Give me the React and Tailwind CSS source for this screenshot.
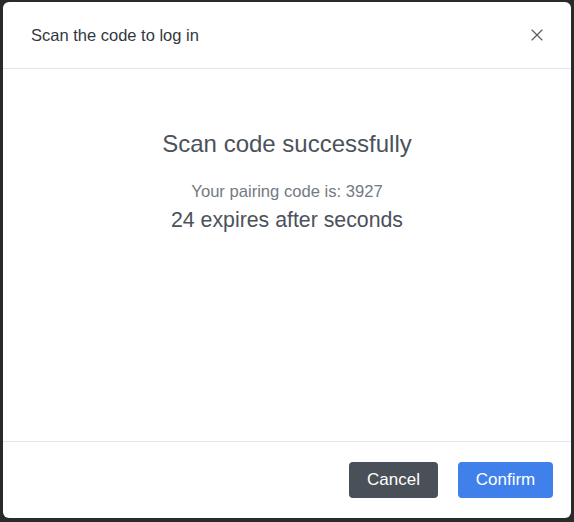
import { X } from 'lucide-react';

function App() {
  return (
    <div className="w-[574px] h-[522px] bg-[#2a2a2a] pt-[2px] pl-[3px] pr-[3px] pb-[4px] font-['Liberation_Sans',Arial,sans-serif]">
      <div className="h-full bg-white rounded-md flex flex-col">
        <div className="h-[67px] flex items-center justify-between pl-[28px] pr-[24px] border-b border-[#e3e7ec]">
          <h1 className="text-[16.5px] text-[#333840]">Scan the code to log in</h1>
          <X size={20} strokeWidth={1.4} className="text-[#5b5f66]" />
        </div>

        <div className="flex-1 flex flex-col items-center pt-[59px] text-[#4b525a]">
          <h2 className="text-[24px] leading-[32px]">Scan code successfully</h2>
          <p className="mt-[22px] text-[16.6px] leading-[20px] text-[#737a83]">Your pairing code is: 3927</p>
          <p className="mt-[6px] text-[21.3px] leading-[24px]">24 expires after seconds</p>
        </div>

        <div className="h-[77px] flex items-center justify-end gap-[20px] pr-[18px] border-t border-[#e3e7ec]">
          <button className="w-[89px] h-[36px] rounded-[4px] bg-[#4a5058] text-white text-[17px]">Cancel</button>
          <button className="w-[95px] h-[36px] rounded-[4px] bg-[#3f80ea] text-white text-[17px]">Confirm</button>
        </div>
      </div>
    </div>
  );
}

export default App;
